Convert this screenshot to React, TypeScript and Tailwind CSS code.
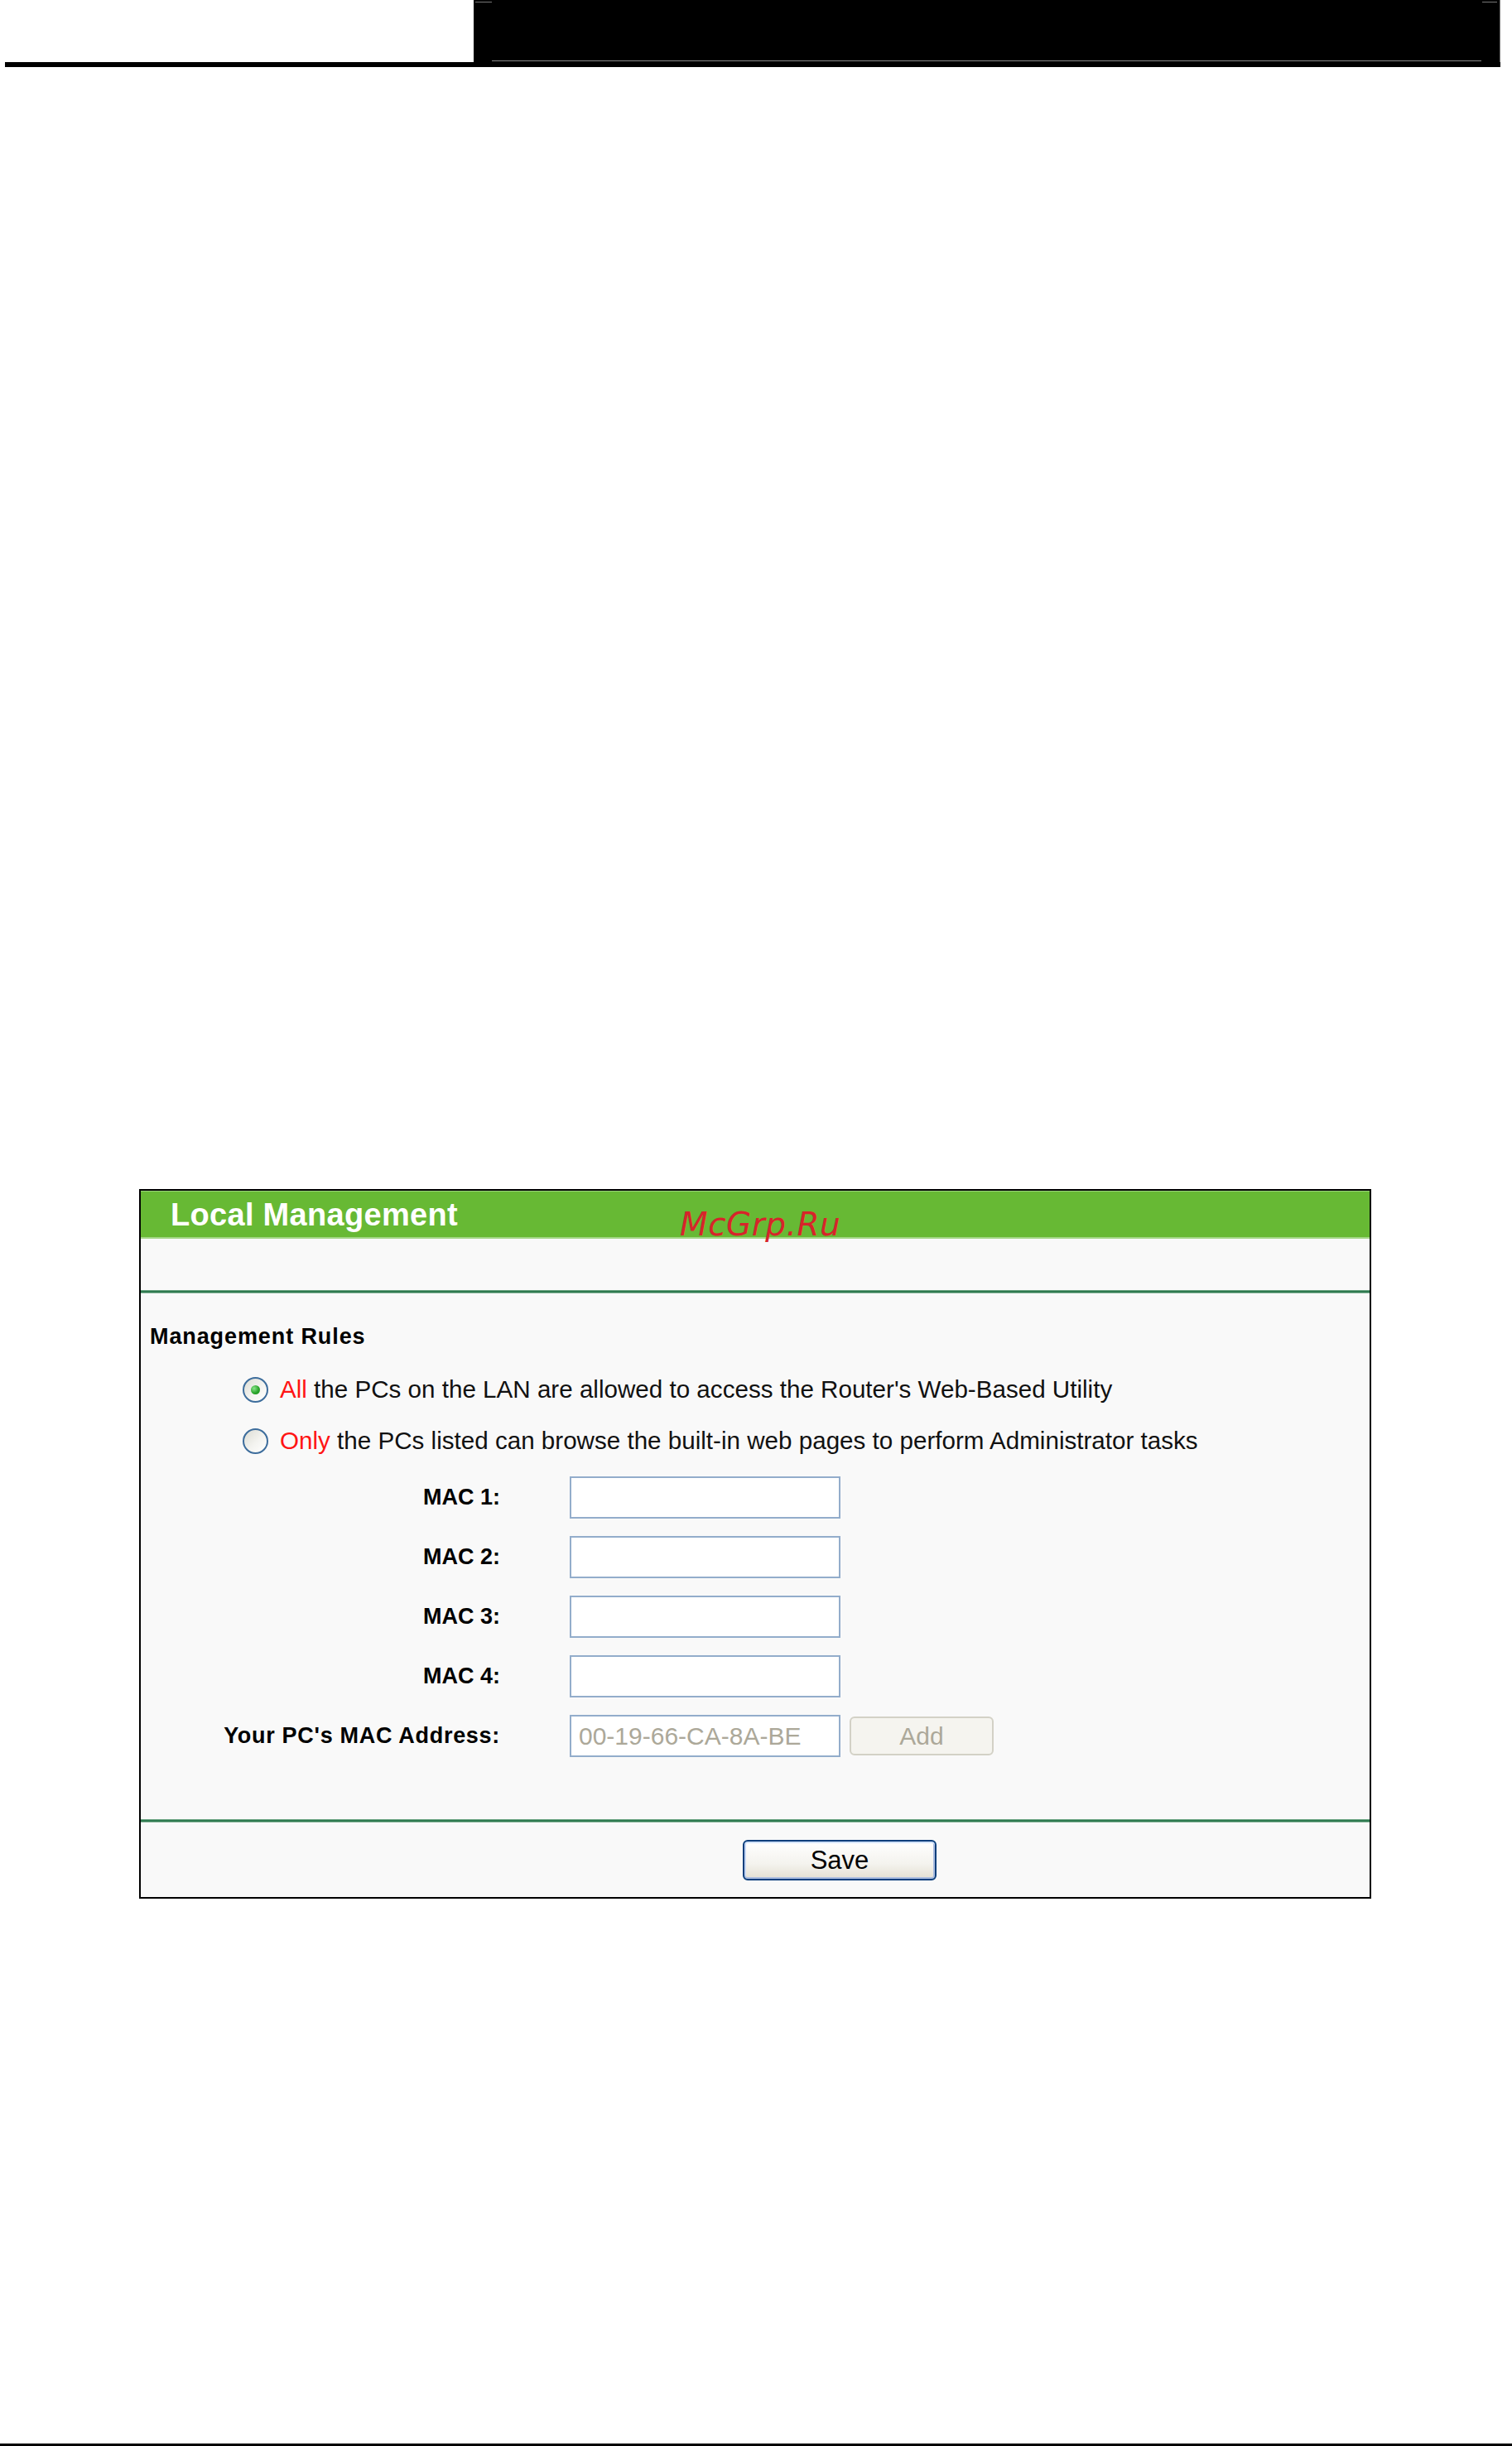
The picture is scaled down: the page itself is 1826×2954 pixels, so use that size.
import React from 'react';

const MAC_ROWS = ['MAC 1:', 'MAC 2:', 'MAC 3:', 'MAC 4:'];

const Radio = ({ checked }: { checked?: boolean }) => (
  <div className="w-[31px] h-[31px] shrink-0 rounded-full border-2 border-[#3d6d9c] bg-[linear-gradient(135deg,#dcdcd4_0%,#f4f4f0_55%,#ffffff_100%)] flex items-center justify-center">
    {checked && (
      <div className="w-[11px] h-[11px] rounded-full bg-[radial-gradient(circle_at_35%_35%,#8be48b_0%,#2aa52a_55%,#178a17_100%)]" />
    )}
  </div>
);

const GreenRule = () => (
  <div className="h-[4px] bg-[linear-gradient(to_bottom,#8fbea0_0%,#2f7a50_30%,#2f7a50_70%,#c7dfcf_100%)]" />
);

export default function App() {
  return (
    <div className="h-[2954px] bg-white flex flex-col font-['Liberation_Sans',Arial,sans-serif] text-black">
      {/* page header */}
      <div className="flex h-[75px]">
        <div className="ml-[572px] w-[1240px] h-full bg-black relative border-r border-[#7a7a7a]">
          <div className="absolute left-[2px] top-[2px] w-[20px] h-[1px] bg-[#777]" />
          <div className="absolute right-[3px] top-[2px] w-[18px] h-[1px] bg-[#777]" />
          <div className="absolute left-[22px] right-[22px] bottom-[1px] h-[1px] bg-[#8a8a8a]" />
        </div>
      </div>
      <div className="ml-[6px] w-[1806px] h-[6px] bg-black" />

      {/* Local Management panel */}
      <div className="relative mt-[1355px] ml-[168px] w-[1488px] border-2 border-black bg-[#f9f9f9]">
        <div className="h-[58px] bg-[#67b934] border-t border-t-[#98d27a] border-b-2 border-b-[#a3d687] flex items-center pl-[36px]">
          <span className="text-white font-bold text-[38px] leading-none tracking-[0.3px]">Local Management</span>
        </div>
        <span className="absolute left-[651px] top-[21px] text-[39px] leading-none italic tracking-[0.5px] text-[#d7242a] font-['DejaVu_Sans',sans-serif]">
          McGrp.Ru
        </span>
        <div className="h-[62px]" />
        <GreenRule />

        <div className="pt-[35px] pb-[75px] flex flex-col">
          <div className="pl-[11px] h-[34px] leading-[34px] text-[27px] font-bold tracking-[0.9px]">Management Rules</div>

          <div className="mt-[16px] flex flex-col text-[29.6px] text-[#111]">
            <label className="h-[62px] pl-[123px] flex items-center gap-[14px]">
              <Radio checked />
              <span>
                <span className="text-[#ff1414]">All</span> the PCs on the LAN are allowed to access the Router's Web-Based Utility
              </span>
            </label>
            <label className="h-[62px] pl-[123px] flex items-center gap-[14px]">
              <Radio />
              <span>
                <span className="text-[#ff1414]">Only</span> the PCs listed can browse the built-in web pages to perform Administrator tasks
              </span>
            </label>
          </div>

          <div className="mt-[12px] flex flex-col gap-[21px]">
            {MAC_ROWS.map((label) => (
              <div key={label} className="h-[51px] flex items-center">
                <div className="w-[434px] text-right text-[27px] font-bold">{label}</div>
                <div className="ml-[84px] w-[327px] h-[51px] bg-white border-2 border-[#93adcb]" />
              </div>
            ))}
            <div className="h-[51px] flex items-center">
              <div className="w-[434px] text-right text-[27px] font-bold tracking-[0.7px]">Your PC's MAC Address:</div>
              <div className="ml-[84px] w-[327px] h-[51px] bg-white border-2 border-[#93adcb] flex items-center pl-[9px] text-[30px] text-[#aca899]">
                00-19-66-CA-8A-BE
              </div>
              <div className="ml-[11px] w-[174px] h-[47px] rounded-[6px] border-2 border-[#d3d1c6] bg-[#f5f4ef] flex items-center justify-center text-[30px] text-[#aca899]">
                Add
              </div>
            </div>
          </div>
        </div>

        <GreenRule />
        <div className="h-[90px] flex items-center pl-[727px]">
          <button className="w-[234px] h-[49px] rounded-[6px] border-2 border-[#0b3f7c] bg-[linear-gradient(to_bottom,#ffffff_0%,#f4f3ee_60%,#e3e0d3_100%)] shadow-[inset_0_2px_0_#d2e2fb,inset_0_-2px_0_#a9bce0,inset_2px_0_0_#c5d6f5,inset_-2px_0_0_#a9bce0] text-[31px] leading-none text-black">
            Save
          </button>
        </div>
      </div>

      <div className="mt-auto h-[3px] bg-black" />
    </div>
  );
}
